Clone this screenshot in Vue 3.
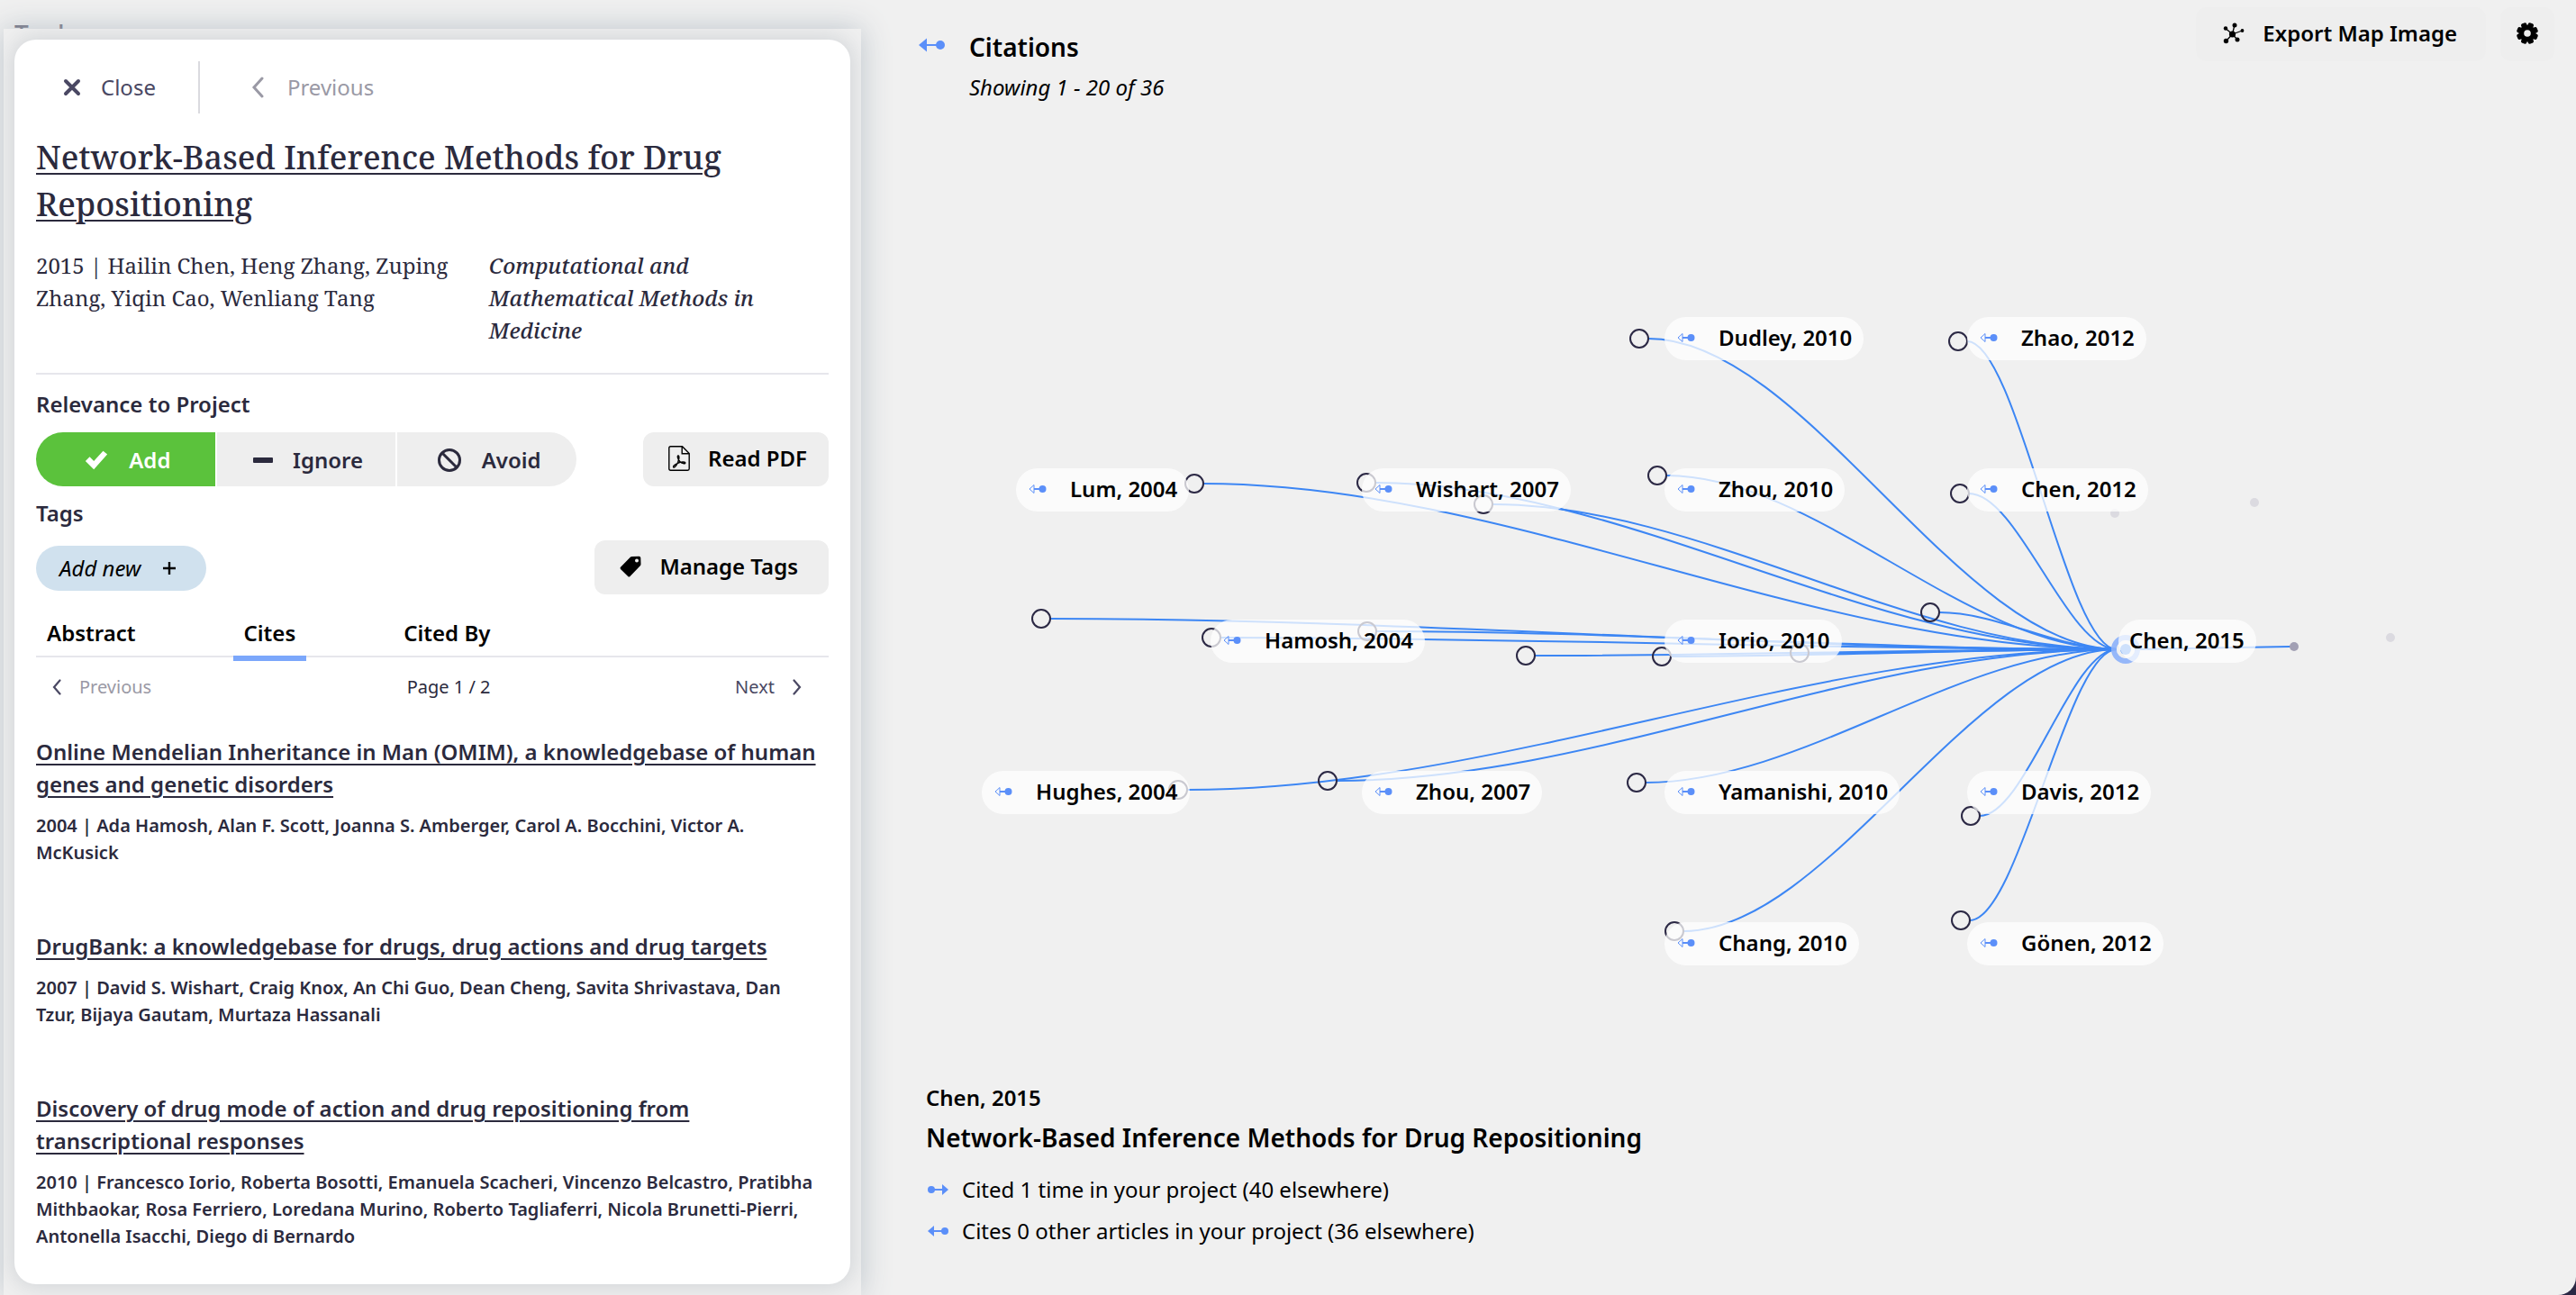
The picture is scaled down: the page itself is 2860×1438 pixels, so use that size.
<script setup>
const articles = [
  {
    title: 'Online Mendelian Inheritance in Man (OMIM), a knowledgebase of human genes and genetic disorders',
    meta: '2004 | Ada Hamosh, Alan F. Scott, Joanna S. Amberger, Carol A. Bocchini, Victor A. McKusick',
  },
  {
    title: 'DrugBank: a knowledgebase for drugs, drug actions and drug targets',
    meta: '2007 | David S. Wishart, Craig Knox, An Chi Guo, Dean Cheng, Savita Shrivastava, Dan Tzur, Bijaya Gautam, Murtaza Hassanali',
  },
  {
    title: 'Discovery of drug mode of action and drug repositioning from transcriptional responses',
    meta: '2010 | Francesco Iorio, Roberta Bosotti, Emanuela Scacheri, Vincenzo Belcastro, Pratibha Mithbaokar, Rosa Ferriero, Loredana Murino, Roberto Tagliaferri, Nicola Brunetti-Pierri, Antonella Isacchi, Diego di Bernardo',
  },
]

const hub = { x: 1404, y: 721 }
const later = { x: 1591, y: 718 }
const faintDots = [[1547, 558], [1392, 570], [1698, 708]]
const nodes = [
  [370, 537], [561, 536], [691, 560], [200, 687], [389, 708],
  [562, 701], [738, 728], [352, 877], [518, 867], [864, 376],
  [1218, 379], [884, 528], [1220, 548], [1187, 680], [889, 729],
  [1042, 725], [861, 869], [1232, 906], [1221, 1022], [903, 1034],
]
const labels = [
  { text: 'Lum, 2004', x: 172, y: 520 },
  { text: 'Hughes, 2004', x: 134, y: 856 },
  { text: 'Hamosh, 2004', x: 388, y: 688 },
  { text: 'Wishart, 2007', x: 556, y: 520 },
  { text: 'Zhou, 2007', x: 556, y: 856 },
  { text: 'Dudley, 2010', x: 892, y: 352 },
  { text: 'Zhou, 2010', x: 892, y: 520 },
  { text: 'Iorio, 2010', x: 892, y: 688 },
  { text: 'Yamanishi, 2010', x: 892, y: 856 },
  { text: 'Chang, 2010', x: 892, y: 1024 },
  { text: 'Zhao, 2012', x: 1228, y: 352 },
  { text: 'Chen, 2012', x: 1228, y: 520 },
  { text: 'Davis, 2012', x: 1228, y: 856 },
  { text: 'Gönen, 2012', x: 1228, y: 1024 },
  { text: 'Chen, 2015', x: 1396, y: 688, plain: true },
]

// Links run from the right rim of a node to the left rim of the hub.
function link([x, y]) {
  const from = x + 10
  const to = hub.x - 10
  const third = (to - from) / 3
  return `M${from} ${y}C${from + third} ${y} ${to - third} ${hub.y} ${to} ${hub.y}`
}
</script>

<template>
  <div class="page">
    <aside class="side">
      <h1 class="under">Tools</h1>
      <div class="frame">
        <article class="card">
          <nav class="topnav">
            <button class="ghost close" type="button">
              <svg width="20" height="20" viewBox="0 0 20 20"><path d="M3 3 17 17M17 3 3 17" stroke="#4a4863" stroke-width="4" stroke-linecap="round" /></svg>
              Close
            </button>
            <button class="ghost prev" type="button" disabled>
              <svg width="14" height="24" viewBox="0 0 14 24"><path d="M12 2 3 12 12 22" fill="none" stroke="#9a99a5" stroke-width="3" stroke-linecap="round" /></svg>
              Previous
            </button>
          </nav>
          <h2 class="title"><a href="#">Network-Based Inference Methods for Drug Repositioning</a></h2>
          <div class="meta">
            <p>2015 | Hailin Chen, Heng Zhang, Zuping Zhang, Yiqin Cao, Wenliang Tang</p>
            <p class="journal">Computational and Mathematical Methods in Medicine</p>
          </div>

          <h3 class="section">Relevance to Project</h3>
          <div class="row">
            <div class="choices">
              <button class="choice add" type="button">
                <svg width="28" height="24" viewBox="0 0 30 24"><path d="M2 13 7 8 12 13 23 1 28 5 12 23Z" fill="#fff" /></svg>
                Add
              </button>
              <button class="choice" type="button">
                <svg width="22" height="8" viewBox="0 0 22 8"><rect y="1" width="22" height="6" rx="1" fill="#2b2a3d" /></svg>
                Ignore
              </button>
              <button class="choice" type="button">
                <svg width="28" height="28" viewBox="0 0 28 28"><circle cx="14" cy="14" r="11.5" fill="none" stroke="#2b2a3d" stroke-width="3" /><path d="M6 6 22 22" stroke="#2b2a3d" stroke-width="3" /></svg>
                Avoid
              </button>
            </div>
            <button class="tool" type="button">
              <svg width="24" height="28" viewBox="0 0 24 28" fill="none" stroke="#000" stroke-width="1.4"><path d="M2.500.8H15.500L23.200 8.500V25.500Q23.200 27.200 21.500 27.200H2.500Q.8 27.200.8 25.500V2.500Q.8.8 2.500.8Z" /><path d="M15.200 1V8.700H23" /><path d="M11 11C9.600 11 10.500 15 12.800 17.500C15 19.500 18.800 20.600 18.800 19C18.800 17.600 14 17.800 10.500 19.300C7 20.800 5 23 5.800 23.900C7 24.800 9.200 21.500 10.700 18.200C12 15 12.400 11 11 11Z" stroke-width="1.400" /></svg>
              Read PDF
            </button>
          </div>

          <h3 class="section tags">Tags</h3>
          <div class="row">
            <button class="newtag" type="button">
              Add new
              <svg width="14" height="14" viewBox="0 0 14 14"><path d="M7 0V14M0 7H14" stroke="#000" stroke-width="2.400" /></svg>
            </button>
            <button class="tool manage" type="button">
              <svg width="24" height="24" viewBox="0 0 24 24"><path fill-rule="evenodd" d="M13.500 1 21.500.8Q23.300.8 23.300 2.600L23.500 9.500Q23.500 10.500 22.800 11.200L11.500 23Q10.300 24 9.200 23L1 15Q0 13.800 1 12.800L12 1.600Q12.600 1 13.500 1ZM19 3.600A2 2 0 1 0 19 7.600A2 2 0 1 0 19 3.600Z" /></svg>
              Manage Tags
            </button>
          </div>

          <div class="tabs">
            <button class="tab" type="button">Abstract</button>
            <button class="tab active" type="button">Cites</button>
            <button class="tab" type="button">Cited By</button>
          </div>
          <div class="pager">
            <button class="step off" type="button" disabled>
              <svg width="10" height="18" viewBox="0 0 10 18"><path d="M8.500 1.500 2 9 8.500 16.500" fill="none" stroke="#4a4863" stroke-width="2.200" stroke-linecap="round" /></svg>
              Previous
            </button>
            <span>Page 1 / 2</span>
            <button class="step" type="button">
              Next
              <svg width="10" height="18" viewBox="0 0 10 18"><path d="M1.500 1.500 8 9 1.500 16.500" fill="none" stroke="#4a4863" stroke-width="2.200" stroke-linecap="round" /></svg>
            </button>
          </div>

          <ul class="list">
            <li v-for="a in articles" :key="a.title">
              <h4><a href="#">{{ a.title }}</a></h4>
              <p>{{ a.meta }}</p>
            </li>
          </ul>
        </article>
      </div>
    </aside>

    <main class="map">
      <svg class="canvas" width="1900" height="1438" viewBox="0 0 1900 1438">
        <circle v-for="d in faintDots" :key="d[0]" :cx="d[0]" :cy="d[1]" r="5" fill="#dbdae0" />
        <g fill="none" stroke="#3c86f4" stroke-width="2">
          <path v-for="n in nodes" :key="n[0]" :d="link(n)" />
          <path :d="`M${hub.x + 10} ${hub.y}L${later.x} ${later.y}`" />
        </g>
        <circle v-for="n in nodes" :key="n[0]" :cx="n[0]" :cy="n[1]" r="10" fill="none" stroke="#2b2844" stroke-width="2" />
        <circle :cx="later.x" :cy="later.y" r="5" fill="#a2a0b4" />
        <circle :cx="hub.x" :cy="hub.y" r="13" fill="none" stroke="#8bb0fa" stroke-opacity=".9" stroke-width="6" />
        <circle :cx="hub.x" :cy="hub.y" r="10" fill="#f0f0f0" />
        <circle :cx="hub.x" :cy="hub.y" r="6" fill="#3c86f4" />
      </svg>
      <button
        v-for="l in labels"
        :key="l.text"
        type="button"
        class="label"
        :class="{ plain: l.plain }"
        :style="{ left: l.x + 'px', top: l.y + 'px' }"
      >
        <svg v-if="!l.plain" width="20" height="12" viewBox="0 0 20 12"><path d="M6 1.500V10.500L1 6Z" fill="none" stroke="#5b8ff9" /><path d="M6 6H15" stroke="#5b8ff9" stroke-width="2" /><circle cx="15.500" cy="6" r="4" fill="#5b8ff9" /></svg>
        {{ l.text }}
      </button>

      <header class="head">
        <div class="headline">
          <svg width="30" height="16" viewBox="0 0 30 16" fill="#5b8ff9"><path d="M0 8 9 .5V15.500Z" /><path d="M8 7H22V9H8Z" /><circle cx="24" cy="8" r="5" /></svg>
          <div>
            <h2>Citations</h2>
            <p>Showing 1 - 20 of 36</p>
          </div>
        </div>
        <div class="actions">
          <button class="tool export" type="button">
            <svg width="24" height="24" viewBox="0 0 24 24"><path d="M10.500 13 13 2.500M10.500 13 21.500 9M10.500 13 3 6.500M10.500 13 3.500 20.500M10.500 13 16 19" stroke="#000" stroke-width="1.300" /><circle cx="10.500" cy="13" r="3.600" /><circle cx="13" cy="3" r="2.500" /><circle cx="21.500" cy="9" r="1.900" /><circle cx="3" cy="6.500" r="2.200" /><circle cx="3.500" cy="20.500" r="2.700" /><circle cx="16" cy="19" r="2.500" /></svg>
            Export Map Image
          </button>
          <button class="tool gear" type="button" aria-label="Settings">
            <svg width="24" height="24" viewBox="0 0 24 24"><g><rect v-for="r in [22.5, 67.5, 112.5, 157.5]" :key="r" x="8.800" y="0" width="6.400" height="24" rx="2" :transform="`rotate(${r} 12 12)`" /></g><circle cx="12" cy="12" r="9.300" /><circle cx="12" cy="12" r="3.800" fill="#eee" /></svg>
          </button>
        </div>
      </header>

      <footer class="foot">
        <p class="who">Chen, 2015</p>
        <h3>Network-Based Inference Methods for Drug Repositioning</h3>
        <ul>
          <li>
            <svg width="24" height="14" viewBox="0 0 24 14" fill="#5b8ff9"><circle cx="4" cy="7" r="4" /><path d="M4 6H17V8H4Z" /><path d="M23 7 16 1V13Z" /></svg>
            Cited 1 time in your project (40 elsewhere)
          </li>
          <li>
            <svg width="24" height="14" viewBox="0 0 24 14" fill="#5b8ff9"><circle cx="19" cy="7" r="4" /><path d="M6 6H19V8H6Z" /><path d="M0 7 7 1V13Z" /></svg>
            Cites 0 other articles in your project (36 elsewhere)
          </li>
        </ul>
      </footer>
    </main>
  </div>
</template>

<style>
body {
  margin: 0;
  background: #2b2844;
}
</style>

<style scoped>
* {
  box-sizing: border-box;
}
h1, h2, h3, h4, p, ul {
  margin: 0;
  padding: 0;
}
ul {
  list-style: none;
}
button {
  font: inherit;
  color: inherit;
  border: 0;
  padding: 0;
  background: none;
}
svg {
  flex: none;
}
.page {
  display: flex;
  min-height: 100vh;
  background: #f0f0f0;
  border-bottom-right-radius: 20px;
  overflow: hidden;
  font: 24px/36px "Noto Sans", sans-serif;
  color: #000;
}
.side {
  position: relative;
  z-index: 1;
  width: 956px;
  flex: none;
  display: flex;
  padding: 32px 0 0 4px;
  color: #2b2a3d;
}
.under {
  position: absolute;
  left: 16px;
  top: 20px;
  font-size: 28px;
  line-height: 36px;
  font-weight: 500;
  color: #5c5b6e;
}
.frame {
  position: relative;
  flex: 1;
  display: flex;
  padding: 12px;
  background: #f0f0f0;
  box-shadow: 0 0 32px #bcc4cb;
  overflow: hidden;
}
.card {
  flex: 1;
  background: #fff;
  border-radius: 24px;
  padding: 24px 24px 36px;
  box-shadow: 0 0 24px 4px #d2d5d8;
}
.topnav {
  display: flex;
  height: 58px;
}
.ghost {
  display: flex;
  align-items: center;
}
.close {
  gap: 22px;
  padding: 0 47px 0 30px;
  border-right: 2px solid #dadadf;
  color: #4a4863;
}
.prev {
  gap: 26px;
  padding-left: 57px;
  color: #9a99a5;
}
.title {
  margin-top: 23px;
  font: 500 36px/52px "Noto Serif", "DejaVu Serif", serif;
}
a {
  color: inherit;
  text-underline-offset: 4px;
  text-decoration-thickness: 2px;
}
.meta {
  display: grid;
  grid-template-columns: 4fr 3fr;
  margin-top: 24px;
  padding-bottom: 29px;
  border-bottom: 2px solid #e6e6ec;
  font-family: "Noto Serif", "DejaVu Serif", serif;
}
.meta p {
  padding-right: 40px;
}
.journal {
  font-style: italic;
  font-weight: 500;
}
.section {
  margin: 15px 0 13px;
  font-size: 24px;
  font-weight: 600;
}
.tags {
  margin: 12px 0;
}
.row {
  display: flex;
  justify-content: space-between;
  align-items: center;
}
.choices {
  display: flex;
  gap: 2px;
  width: 600px;
  height: 60px;
  border-radius: 30px;
  overflow: hidden;
}
.choice {
  flex: 1;
  display: flex;
  align-items: center;
  justify-content: center;
  gap: 22px;
  padding: 2px 0 0 4px;
  background: #eee;
  font-weight: 600;
}
.add {
  background: #5bc23c;
  color: #fff;
}
.tool {
  display: flex;
  align-items: center;
  gap: 20px;
  height: 60px;
  padding: 0 24px 2px 28px;
  border-radius: 12px;
  background: #eee;
  color: #000;
  font-weight: 600;
}
.manage {
  padding-right: 34px;
}
.newtag {
  display: flex;
  align-items: center;
  gap: 25px;
  height: 50px;
  margin-top: 2px;
  padding: 0 34px 0 26px;
  border-radius: 25px;
  background: #d0e1ee;
  color: #000;
  font-style: italic;
}
.tabs {
  display: flex;
  gap: 96px;
  margin-top: 24px;
  border-bottom: 2px solid #e6e6ec;
  color: #000;
  font-weight: 600;
}
.tab {
  position: relative;
  height: 44px;
  padding: 0 12px 6px;
}
.active::after {
  content: "";
  position: absolute;
  left: 0;
  right: 0;
  top: 44px;
  height: 6px;
  background: #7ba7fb;
}
.pager {
  display: flex;
  justify-content: space-between;
  margin-top: 15px;
  padding: 0 30px 0 18px;
  font-size: 20px;
}
.step {
  display: flex;
  align-items: center;
  gap: 20px;
  color: #4a4863;
}
.off {
  padding-right: 12px;
  color: #9a99a5;
}
.list {
  display: grid;
  gap: 71px;
  margin-top: 36px;
}
.list h4 {
  font-size: 24px;
  font-weight: 600;
}
.list p {
  margin-top: 13px;
  padding-right: 16px;
  font-size: 20px;
  line-height: 30px;
  font-weight: 600;
}
.map {
  position: relative;
  flex: 1;
  display: flex;
  flex-direction: column;
  justify-content: space-between;
}
.canvas {
  position: absolute;
  left: 0;
  top: 0;
}
.label {
  position: absolute;
  display: flex;
  align-items: center;
  gap: 26px;
  height: 48px;
  padding: 0 13px 2px 14px;
  border-radius: 24px;
  background: rgba(255, 255, 255, 0.75);
  font-weight: 600;
  white-space: nowrap;
}
.plain {
  padding-left: 12px;
}
.head {
  position: relative;
  display: flex;
  justify-content: space-between;
  padding: 8px 24px 0 64px;
}
.headline {
  display: flex;
  gap: 26px;
  margin-top: 26px;
}
.headline svg {
  margin-top: 8px;
}
.headline h2 {
  font-size: 28px;
  font-weight: 600;
}
.headline p {
  margin-top: 9px;
  font-style: italic;
}
.actions {
  display: flex;
  gap: 16px;
}
.export {
  padding: 0 32px 2px 30px;
}
.gear {
  width: 60px;
  padding: 0 0 2px;
  justify-content: center;
}
.foot {
  position: relative;
  padding: 0 0 48px 72px;
}
.who {
  font-weight: 600;
}
.foot h3 {
  margin: 3px 0 12px;
  font-size: 28px;
  line-height: 46px;
  font-weight: 600;
}
.foot li {
  display: flex;
  align-items: center;
  gap: 14px;
  padding-left: 2px;
  line-height: 46px;
}
</style>
